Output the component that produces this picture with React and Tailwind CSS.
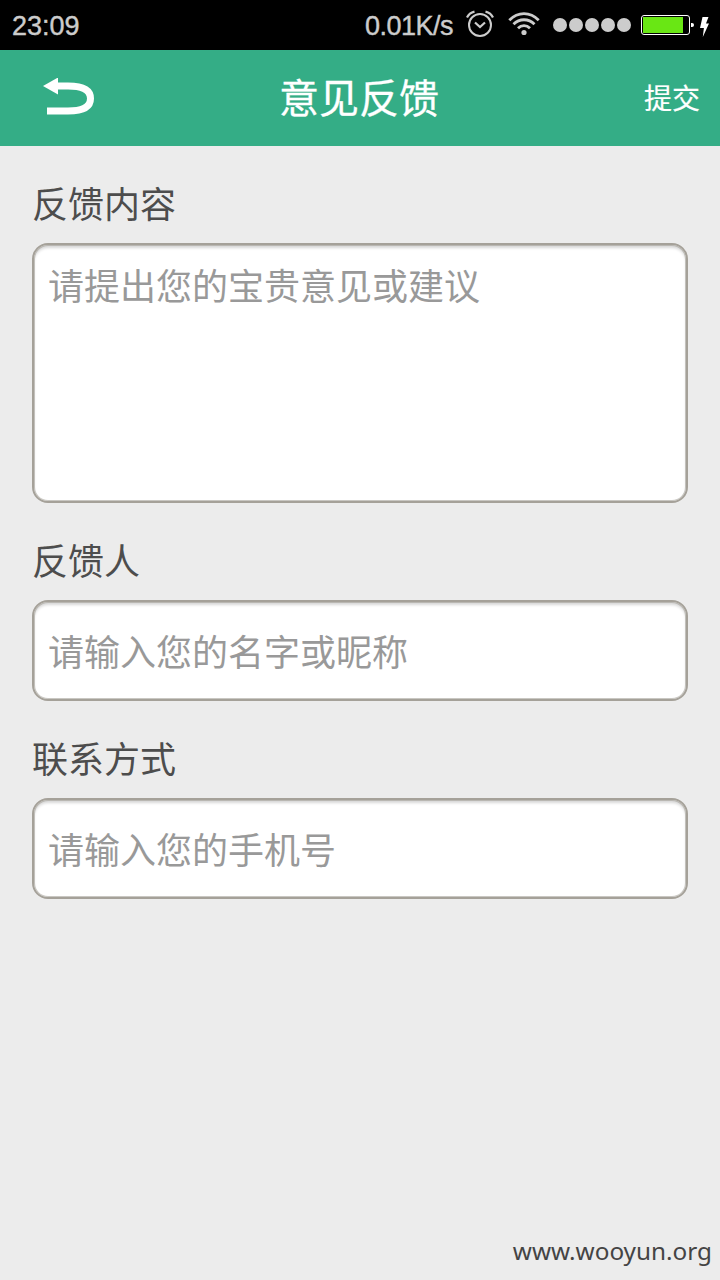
const fieldClass =
  "block w-full resize-none rounded-[16px] border-2 border-[#a5a199] bg-white px-[14px] text-[36px] text-[#555] shadow-[inset_0_0_0_1px_rgba(165,161,153,0.6),inset_0_3px_3px_rgba(0,0,0,0.16)] outline-none placeholder:text-[#999] placeholder:opacity-100"

function AlarmIcon() {
  return (
    <svg className="h-[28px] w-[28px]" viewBox="0 0 28 28" fill="none" stroke="#ccc">
      <circle cx="14" cy="15" r="11" strokeWidth="2" />
      <path d="M9 12.500l5 4.500 5-4.500" strokeWidth="2.2" />
      <path d="M1 7.5C2.3 4.7 5 2.4 8.5 1.6M27 7.5C25.7 4.7 23 2.4 19.500 1.600" strokeWidth="2.2" />
    </svg>
  )
}

function WifiIcon() {
  return (
    <svg className="h-[24px] w-[32px]" viewBox="0 0 32 24" fill="none" stroke="#ccc" strokeWidth="2.8">
      <path d="M1.300 8.300C10 -0.500 22 -0.500 30.700 8.300" />
      <path d="M5.500 12.300C11.500 6.200 20.500 6.200 26.500 12.300" />
      <path d="M10 16.300C13.500 12.700 18.500 12.700 22 16.300" />
      <circle cx="16" cy="20.500" r="2.600" fill="#ccc" stroke="none" />
    </svg>
  )
}

function StatusBar() {
  return (
    <div className="flex h-[50px] items-center bg-black pr-[11px] pl-[12px] font-['Liberation_Sans',sans-serif] text-[27px] text-[#ccc] [-webkit-text-stroke-color:#ccc]">
      <span className="mt-[3px] leading-none [-webkit-text-stroke-width:0.4px]">23:09</span>
      <span className="mt-[3px] ml-auto leading-none tracking-[-0.5px] [-webkit-text-stroke-width:0.4px]">0.01K/s</span>
      <span className="ml-[13px] -mt-[2px]"><AlarmIcon /></span>
      <span className="ml-[14px] -mt-[2px]"><WifiIcon /></span>
      <div className="ml-[13px] flex gap-[2px]">
        {[0, 1, 2, 3, 4].map((i) => (
          <span key={i} className="h-[14px] w-[14px] rounded-full bg-[#ccc]"></span>
        ))}
      </div>
      <div className="ml-[10px] h-[20px] w-[49px] rounded-[3px] border border-white p-px">
        <div className="h-full w-[40px] bg-[#69e714]"></div>
      </div>
      <span className="ml-[1px] h-[4px] w-[3px] rounded-r-full bg-white"></span>
      <svg className="mt-[3px] ml-[6px] h-[20px] w-[9px] shrink-0" viewBox="0 0 9 20" fill="#fff">
        <path d="M2.500 0h6L6 6.500h3L2.800 20l1.100-9H0z" />
      </svg>
    </div>
  )
}

function Field({ label, children }) {
  return (
    <label className="flex flex-col gap-[23px]">
      <span className="text-[36px] leading-[36px] text-[#4d4d4d]">{label}</span>
      {children}
    </label>
  )
}

export default function App() {
  return (
    <div className="flex h-[1280px] w-[720px] flex-col overflow-hidden bg-[#ececec] font-['Noto_Sans_CJK_SC',sans-serif]">
      <StatusBar />

      <header className="grid h-[96px] grid-cols-3 items-center bg-[#34ad86] text-white">
        <button className="mb-[2px] ml-[43px] justify-self-start" aria-label="返回">
          <svg className="h-[38px] w-[52px]" viewBox="0 0 52 38" fill="none">
            <path d="M0 8L15 -0.500V16.500z" fill="#fff" />
            <path d="M14 8H25C40 8 47.500 12.500 47.500 20.500S40 33 25 33H4" stroke="#fff" strokeWidth="7" />
          </svg>
        </button>
        <h1 className="mb-[4px] pr-[2px] text-center text-[40px] leading-none [-webkit-text-stroke:0.3px_#fff]">意见反馈</h1>
        <button className="mr-[20px] mb-[2px] justify-self-end text-[28px] leading-none [-webkit-text-stroke:0.2px_#fff]">提交</button>
      </header>

      <main className="flex flex-1 flex-col gap-[38px] px-8 pt-[38px]">
        <Field label="反馈内容">
          <textarea className={`${fieldClass} h-[260px] pt-[12px] leading-[54px]`} placeholder="请提出您的宝贵意见或建议" />
        </Field>
        <Field label="反馈人">
          <input className={`${fieldClass} h-[101px] pb-[2px]`} placeholder="请输入您的名字或昵称" />
        </Field>
        <Field label="联系方式">
          <input className={`${fieldClass} h-[101px] pb-[2px]`} placeholder="请输入您的手机号" />
        </Field>
      </main>

      <footer className="pr-[8px] pb-[12px] text-right font-['Noto_Sans',sans-serif] text-[24.3px] leading-[34px] text-[#444]">
        www.wooyun.org
      </footer>
    </div>
  )
}
